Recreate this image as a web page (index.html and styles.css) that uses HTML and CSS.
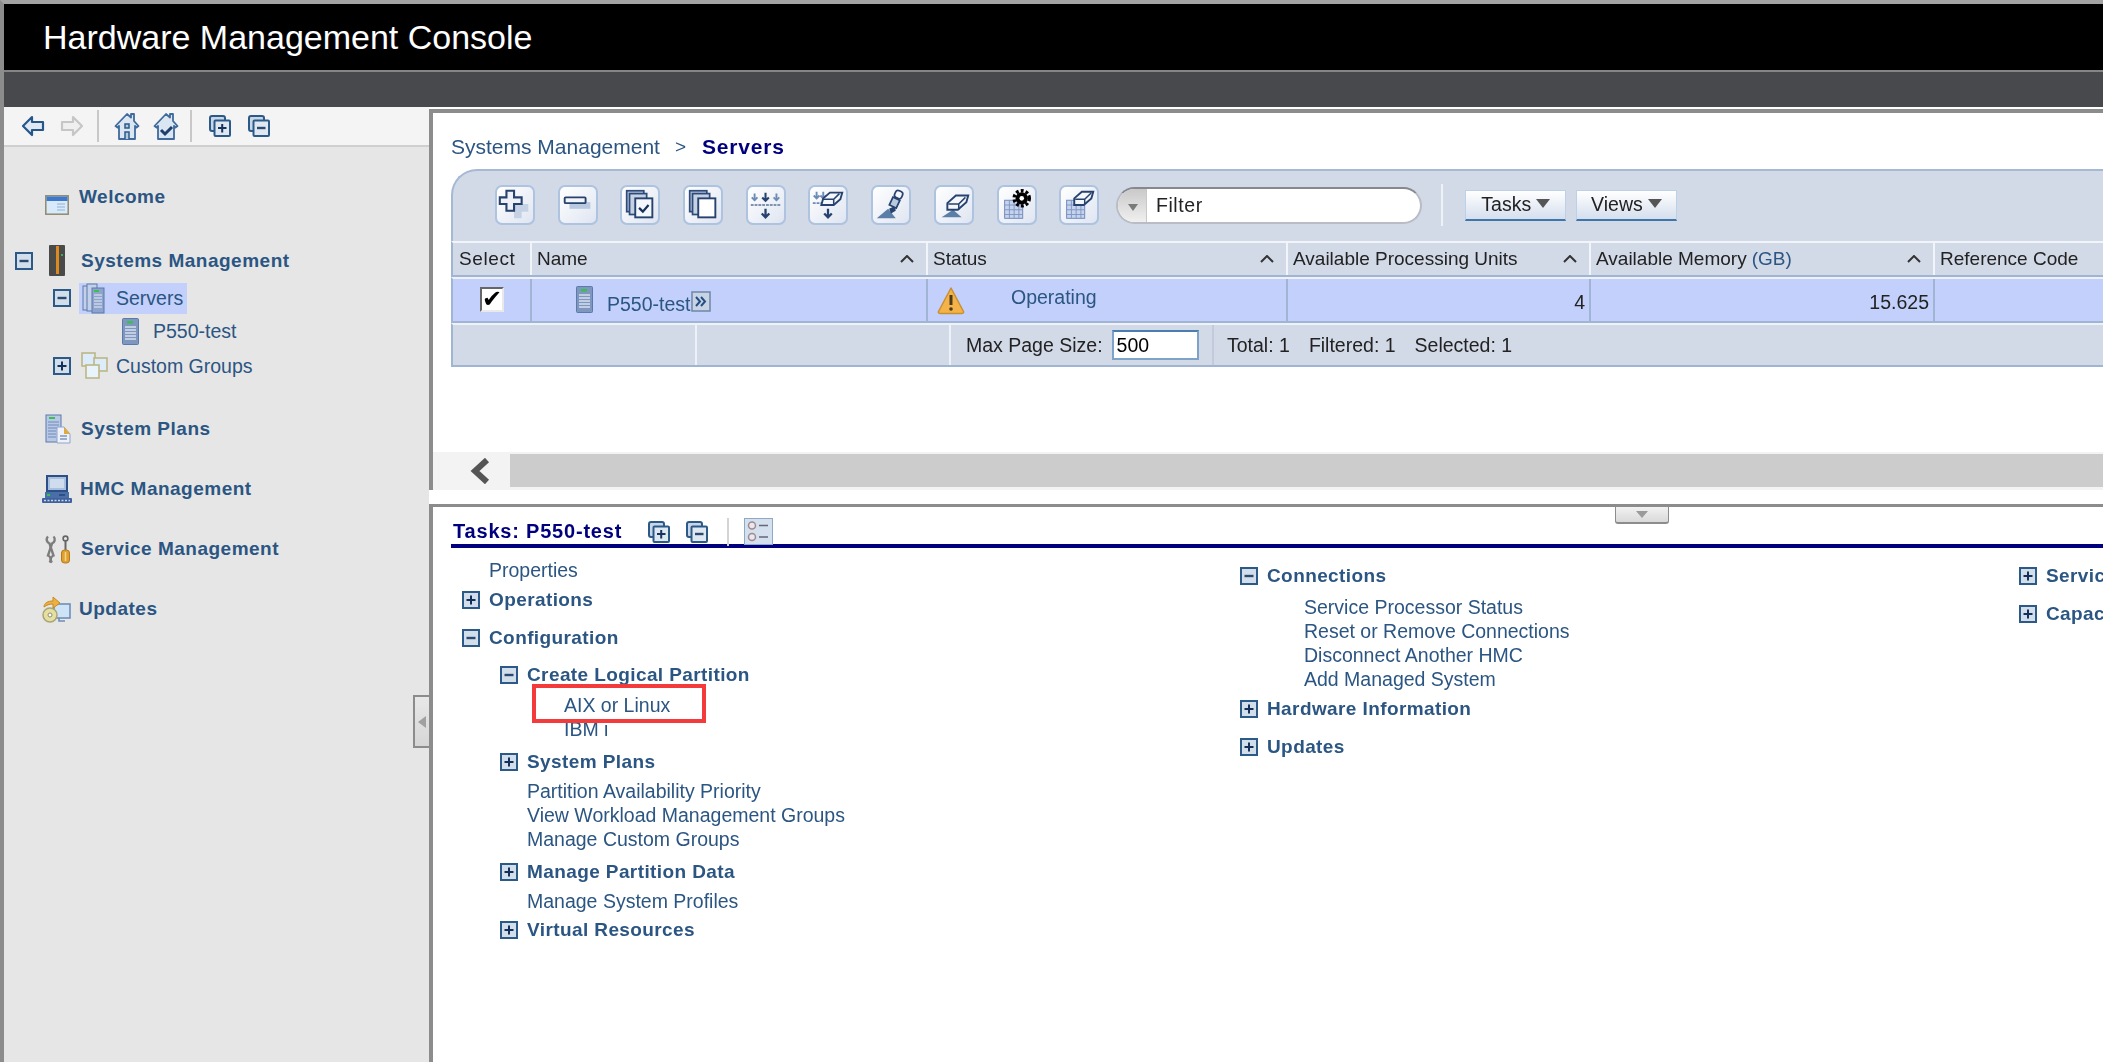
FILE: index.html
```html
<!DOCTYPE html>
<html>

<head>
    <meta name="viewport" content="width=device-width, initial-scale=1">
    <title>Hardware Management Console</title>
    <link rel="stylesheet" href="styles.css">
</head>

<body>
    <!-- icon sprites -->
    <svg class="sprites" width="0" height="0">
        <symbol id="i-plus" viewBox="0 0 18 18"><rect x="1" y="1" width="16" height="16" fill="#d3deeb" stroke="#2c5a88" stroke-width="2"/><path d="M4.5 9h9M9 4.5v9" stroke="#14305a" stroke-width="2"/></symbol>
        <symbol id="i-minus" viewBox="0 0 18 18"><rect x="1" y="1" width="16" height="16" fill="#d3deeb" stroke="#2c5a88" stroke-width="2"/><path d="M4.5 9h9" stroke="#2c4a70" stroke-width="2.4"/></symbol>
        <symbol id="i-back" viewBox="0 0 24 22"><path d="M11 2 2 11l9 9v-5h11V7H11z" fill="#dfe8f3" stroke="#27578a" stroke-width="2.2" stroke-linejoin="round"/></symbol>
        <symbol id="i-fwd" viewBox="0 0 24 22"><path d="M13 2l9 9-9 9v-5H2V7h11z" fill="#efefef" stroke="#c6c6c6" stroke-width="2.2" stroke-linejoin="round"/></symbol>
        <symbol id="i-home" viewBox="0 0 26 30"><path d="M13 3 1.5 15l2 1.5L5 15v13h16V15l1.5 1.5 2-1.5L20 10V3h-3v3.5z" fill="#dbe6f3" stroke="#3f6a9c" stroke-width="1.8" stroke-linejoin="round"/><path d="M11 28v-7h4v7M11 13h4v4h-4z" fill="#b4c8e0" stroke="#2c5a88" stroke-width="1.5"/></symbol>
        <symbol id="i-homecheck" viewBox="0 0 26 30"><path d="M13 3 1.5 15l2 1.5L5 15v13h16V15l1.5 1.5 2-1.5L20 10V3h-3v3.5z" fill="#dbe6f3" stroke="#3f6a9c" stroke-width="1.8" stroke-linejoin="round"/><path d="m8 19 4 4 7-7" fill="none" stroke="#1e3f6c" stroke-width="3"/></symbol>
        <symbol id="i-stackplus" viewBox="0 0 22 22"><rect x="1" y="1" width="15" height="15" rx="2" fill="#c8d6e8" stroke="#2c5a88" stroke-width="2"/><rect x="5.5" y="5.5" width="15.5" height="15.5" rx="1" fill="#dfe7f1" stroke="#2c5a88" stroke-width="2"/><path d="M9 13h8.5M13.2 9v8.5" stroke="#17345e" stroke-width="2"/></symbol>
        <symbol id="i-stackminus" viewBox="0 0 22 22"><rect x="1" y="1" width="15" height="15" rx="2" fill="#c8d6e8" stroke="#2c5a88" stroke-width="2"/><rect x="5.5" y="5.5" width="15.5" height="15.5" rx="1" fill="#dfe7f1" stroke="#2c5a88" stroke-width="2"/><path d="M9 13h8.5" stroke="#2c4a70" stroke-width="2.4"/></symbol>
        <symbol id="i-window" viewBox="0 0 24 20"><rect x=".8" y=".8" width="22.4" height="18.4" fill="#d8eafa" stroke="#8f8a70" stroke-width="1.5"/><rect x="1.5" y="1.5" width="21" height="4.5" fill="#3f78c8"/><path d="M12 9h8M12 12h8M12 15h8" stroke="#8fb0d8" stroke-width="1.2"/></symbol>
        <symbol id="i-tower" viewBox="0 0 16 31"><rect width="16" height="31" rx="1" fill="#4a4a48"/><rect x="7" y="1" width="3" height="28" fill="#d98a20"/><rect x="12" y="9" width="2" height="2" fill="#36b060"/></symbol>
        <symbol id="i-servers" viewBox="0 0 23 31"><rect x="1" y="3" width="9" height="24" fill="#c3d0ea" stroke="#5a79ac"/><rect x="5" y="1" width="10" height="27" fill="#c3d0ea" stroke="#5a79ac"/><rect x="10" y="5" width="12" height="25" fill="#8ea4cc" stroke="#5a79ac"/><path d="M12 12h8M12 15h8M12 18h8M12 21h8M12 24h8" stroke="#e5ebf6" stroke-width="1.2"/><rect x="12" y="7" width="5" height="2" fill="#38c050"/></symbol>
        <symbol id="i-server" viewBox="0 0 17 27"><rect x=".5" y=".5" width="16" height="26" rx="1" fill="#7f96bf" stroke="#5a79ac"/><path d="M3 9h11M3 12h11M3 15h11M3 18h11M3 21h11" stroke="#d7e0f0" stroke-width="1.3"/><rect x="5" y="3" width="6" height="2.5" fill="#38c050"/></symbol>
        <symbol id="i-groups" viewBox="0 0 27 28"><rect x="1" y="1" width="13" height="13" fill="#dcecfa" stroke="#bdb784" stroke-width="1.6"/><rect x="13" y="6" width="13" height="13" fill="#dcecfa" stroke="#bdb784" stroke-width="1.6"/><rect x="5" y="13" width="13" height="13" fill="#e8f4fc" stroke="#bdb784" stroke-width="1.6"/></symbol>
        <symbol id="i-plans" viewBox="0 0 26 30"><rect x="1" y="1" width="15" height="27" fill="#b9c8e4" stroke="#5a79ac"/><path d="M3 8h11M3 11h11M3 14h11M3 17h8M3 20h8M3 23h8" stroke="#6f8abb" stroke-width="1.2"/><rect x="4" y="3" width="6" height="2" fill="#38c050"/><path d="M12 13h7l6 7v9H12z" fill="#eef2f8" stroke="#8ea4cc"/><path d="M19 13v7h6z" fill="#e0a93c"/><path d="M15 22h7M15 25h7" stroke="#7f96bf" stroke-width="1.3"/></symbol>
        <symbol id="i-hmc" viewBox="0 0 30 29"><rect x="5" y="1" width="20" height="15" fill="#a9bfe0" stroke="#2c5086" stroke-width="2"/><rect x="8" y="4" width="14" height="9" fill="#cfdcee"/><rect x="3" y="17" width="24" height="6" fill="#4a6ea8"/><rect x="5" y="19" width="3" height="2" fill="#38c050"/><rect x="17" y="19" width="6" height="2" fill="#2c5086"/><rect y="23" width="30" height="5" rx="1" fill="#3f629e"/><path d="M2 25.5h26" stroke="#c7d4ea" stroke-width="1.4" stroke-dasharray="2 1.5"/></symbol>
        <symbol id="i-service" viewBox="0 0 26 29"><g fill="none" stroke="#7d7d7d" stroke-width="2.4"><path d="M3 1.500C.5 4 2 7.500 4.500 8.500l4 12C6 21.500 4.500 25 7 27.500"/><path d="M8.500 1.500C11 4 9.500 7.500 7 8.500l-4 12C5.500 21.500 7 25 4.500 27.500"/></g><path d="M20.500 15V6" stroke="#666" stroke-width="2"/><circle cx="20.500" cy="3.500" r="2.400" fill="none" stroke="#666" stroke-width="1.600"/><rect x="16.500" y="15" width="8" height="13" rx="3" fill="#e0a030" stroke="#b57a18"/><path d="M20.500 17v9" stroke="#f4d48a" stroke-width="1.500"/></symbol>
        <symbol id="i-updates" viewBox="0 0 29 27"><rect x="12" y="8" width="16" height="14" fill="#cfe3f6" stroke="#6d8fb8" stroke-width="1.6"/><path d="M17 22v3h6" stroke="#6d8fb8" stroke-width="1.6" fill="none"/><circle cx="8" cy="19" r="7" fill="#e5dfa0" stroke="#a9a577" stroke-width="1.5"/><circle cx="8" cy="19" r="2" fill="#fff" stroke="#8f8a70"/><path d="M2 11c0-4 4-6 9-6V1l7 6-7 5V8c-4 0-6 1-9 3z" fill="#eeb040" stroke="#c58a20"/></symbol>
        <symbol id="i-warn" viewBox="0 0 28 29"><path d="M14 2 1.5 25.500q-.5 2 2 2h21q2.500 0 2-2z" fill="#f4b349" stroke="#c98f32" stroke-width="1.500" stroke-linejoin="round"/><path d="M14 9v10" stroke="#4a3a20" stroke-width="3"/><circle cx="14" cy="23" r="1.800" fill="#4a3a20"/></symbol>
        <symbol id="i-launch" viewBox="0 0 20 21"><rect x="1" y="1" width="18" height="19" fill="#c8d4e4" stroke="#6d86a8" stroke-width="1.5"/><path d="m5 6 4 4.500L5 15M10 6l4 4.500L10 15" fill="none" stroke="#234e86" stroke-width="2"/></symbol>
        <symbol id="i-caret" viewBox="0 0 14 8"><path d="m1 7 6-6 6 6" fill="none" stroke="#333" stroke-width="2"/></symbol>
        <symbol id="i-checks" viewBox="0 0 29 27"><rect x=".5" y=".5" width="28" height="26" fill="#d5e0ee" stroke="#8ea8c8"/><circle cx="8" cy="7.500" r="3.500" fill="#e8e8ee" stroke="#a08a90" stroke-width="1.5"/><circle cx="8" cy="19" r="3.500" fill="#e8e8ee" stroke="#a08a90" stroke-width="1.5"/><path d="M15 7.500h9M15 19h9" stroke="#667" stroke-width="1.5"/></symbol>

        <symbol id="t-add" viewBox="0 0 40 40"><path d="M14 12h8v7h7v8h-7v7h-8v-7H7v-8h7z" transform="translate(5 0)" fill="#c5d2e6"/><path d="M11 5h8v7h8v7h-8v7h-8v-7H4v-7h7z" fill="#eef2f8" stroke="#27426e" stroke-width="2.2"/></symbol>
        <symbol id="t-del" viewBox="0 0 40 40"><rect x="11" y="17" width="22" height="7" fill="#b9c9e0"/><rect x="6" y="12" width="22" height="6" rx="1" fill="#f2f5fa" stroke="#27426e" stroke-width="2"/></symbol>
        <symbol id="t-sel" viewBox="0 0 40 40"><rect x="6" y="5" width="18" height="22" fill="#b4c3da" stroke="#2d4a78" stroke-width="1.8"/><rect x="9" y="8" width="18" height="22" fill="#c6d2e4" stroke="#2d4a78" stroke-width="1.8"/><rect x="15" y="13" width="18" height="20" fill="#f4f7fb" stroke="#27426e" stroke-width="2"/><path d="m19 23 4 4 6-7" fill="none" stroke="#17305a" stroke-width="2.4"/></symbol>
        <symbol id="t-desel" viewBox="0 0 40 40"><rect x="6" y="5" width="18" height="22" fill="#b4c3da" stroke="#2d4a78" stroke-width="1.8"/><rect x="9" y="8" width="18" height="22" fill="#c6d2e4" stroke="#2d4a78" stroke-width="1.8"/><rect x="15" y="13" width="18" height="20" fill="#fff" stroke="#27426e" stroke-width="2"/></symbol>
        <symbol id="t-filter" viewBox="0 0 40 40"><g fill="none" stroke="#6d8cb4" stroke-width="2"><path d="M8 8v7M31 8v7"/><path d="m5 12 3 3 3-3M28 12l3 3 3-3"/></g><path d="M19.500 7v8M16 12l3.500 3.500L23 12" fill="none" stroke="#27426e" stroke-width="2.2"/><path d="M4 20h32" stroke="#7f93b0" stroke-width="2" stroke-dasharray="3 1"/><path d="M19.500 24v9M15.500 29l4 4 4-4" fill="none" stroke="#27426e" stroke-width="2.4"/></symbol>
        <symbol id="t-filterclear" viewBox="0 0 40 40"><g fill="none" stroke="#6d8cb4" stroke-width="2"><path d="M8 6v7M5 10l3 3 3-3M15 6v7M12 10l3 3 3-3"/><path d="M4 18h12" stroke-dasharray="3 1"/></g><path d="m15 13 7-6h13l-2 7-7 6H13z" fill="#f4f7fb" stroke="#27426e" stroke-width="2"/><path d="M14 14h12l6-6M26 14v6" fill="none" stroke="#27426e" stroke-width="1.6"/><path d="M20 24v9M16 29l4 4 4-4" fill="none" stroke="#27426e" stroke-width="2.4"/></symbol>
        <symbol id="t-edit" viewBox="0 0 40 40"><path d="M5 34h20l-8-10z" fill="#5b7ea8"/><path d="m18 24 2 5 5-3-1-5z" fill="#27426e"/><rect x="20" y="13" width="8" height="9" transform="rotate(25 24 17)" fill="#b9c9e0" stroke="#27426e" stroke-width="1.8"/><rect x="24" y="5" width="8" height="8" rx="3" transform="rotate(25 28 9)" fill="#f4f7fb" stroke="#27426e" stroke-width="1.8"/></symbol>
        <symbol id="t-erase" viewBox="0 0 40 40"><path d="M7 33h21l-9-8z" fill="#5b7ea8"/><path d="m13 18 9-8h13l-2 7-9 8H13z" fill="#f4f7fb" stroke="#27426e" stroke-width="2"/><path d="M14 19h11l7-7M25 19v6" fill="none" stroke="#27426e" stroke-width="1.6"/></symbol>
        <symbol id="t-gear" viewBox="0 0 40 40"><rect x="7" y="15" width="19" height="19" fill="#c6d3ec" stroke="#6d86b8"/><path d="M12 15v19M17 15v19M22 15v19M7 20h19M7 25h19M7 30h19" stroke="#7f96c4"/><circle cx="25" cy="13" r="8" fill="none" stroke="#000" stroke-width="3.5" stroke-dasharray="3 2.2"/><circle cx="25" cy="13" r="6.5" fill="#000"/><circle cx="25" cy="13" r="2.4" fill="#fff"/></symbol>
        <symbol id="t-tableclear" viewBox="0 0 40 40"><rect x="7" y="15" width="19" height="19" fill="#c6d3ec" stroke="#6d86b8"/><path d="M12 15v19M17 15v19M22 15v19M7 20h19M7 25h19M7 30h19" stroke="#7f96c4"/><path d="m15 13 8-7h12l-2 7-8 7H15z" fill="#f4f7fb" stroke="#27426e" stroke-width="2"/><path d="M16 14h10l7-7M26 14v5" fill="none" stroke="#27426e" stroke-width="1.5"/></symbol>
    </svg>

    <div class="app">
        <div class="banner">Hardware Management Console</div>
        <div class="subbar"></div>

        <div class="main">
            <div class="nav">
                <div class="nav-tools">
                    <svg class="t-arrow"><use href="#i-back"/></svg>
                    <svg class="t-arrow"><use href="#i-fwd"/></svg>
                    <span class="t-sep"></span>
                    <svg class="t-home"><use href="#i-home"/></svg>
                    <svg class="t-home"><use href="#i-homecheck"/></svg>
                    <span class="t-sep"></span>
                    <svg class="t-stack"><use href="#i-stackplus"/></svg>
                    <svg class="t-stack"><use href="#i-stackminus"/></svg>
                </div>

                <div class="tree">
                    <div class="node top first">
                        <svg class="welcome-icon" width="24" height="20"><use href="#i-window"/></svg>
                        <a class="top-link">Welcome</a>
                    </div>
                    <div class="node top has-exp">
                        <svg class="exp" width="18" height="18"><use href="#i-minus"/></svg>
                        <svg class="tower-icon" width="16" height="31"><use href="#i-tower"/></svg>
                        <a class="top-link">Systems Management</a>
                    </div>
                    <div class="node sub servers-row">
                        <svg class="exp" width="18" height="18"><use href="#i-minus"/></svg>
                        <span class="selected">
                            <svg width="23" height="31"><use href="#i-servers"/></svg>
                            <a>Servers</a>
                        </span>
                    </div>
                    <div class="node leaf">
                        <svg width="17" height="27"><use href="#i-server"/></svg>
                        <a>P550-test</a>
                    </div>
                    <div class="node sub groups-row">
                        <svg class="exp" width="18" height="18"><use href="#i-plus"/></svg>
                        <svg class="groups-icon" width="27" height="28"><use href="#i-groups"/></svg>
                        <a>Custom Groups</a>
                    </div>
                    <div class="node top plans-row">
                        <svg class="top-icon" width="26" height="30"><use href="#i-plans"/></svg>
                        <a class="top-link">System Plans</a>
                    </div>
                    <div class="node top">
                        <svg class="top-icon wide" width="30" height="29"><use href="#i-hmc"/></svg>
                        <a class="top-link">HMC Management</a>
                    </div>
                    <div class="node top">
                        <svg class="top-icon" width="26" height="29"><use href="#i-service"/></svg>
                        <a class="top-link">Service Management</a>
                    </div>
                    <div class="node top">
                        <svg class="top-icon wide" width="29" height="27"><use href="#i-updates"/></svg>
                        <a class="top-link">Updates</a>
                    </div>
                </div>

                <div class="side-handle"><span></span></div>
            </div>

            <div class="content">
                <div class="work">
                    <div class="crumbs">
                        <a>Systems Management</a><span class="crumb-sep">&gt;</span><b>Servers</b>
                    </div>

                    <div class="toolbar">
                        <span class="tbtn"><svg width="38" height="38"><use href="#t-add"/></svg></span>
                        <span class="tbtn"><svg width="38" height="38"><use href="#t-del"/></svg></span>
                        <span class="tbtn"><svg width="38" height="38"><use href="#t-sel"/></svg></span>
                        <span class="tbtn"><svg width="38" height="38"><use href="#t-desel"/></svg></span>
                        <span class="tbtn"><svg width="38" height="38"><use href="#t-filter"/></svg></span>
                        <span class="tbtn"><svg width="38" height="38"><use href="#t-filterclear"/></svg></span>
                        <span class="tbtn"><svg width="38" height="38"><use href="#t-edit"/></svg></span>
                        <span class="tbtn"><svg width="38" height="38"><use href="#t-erase"/></svg></span>
                        <span class="tbtn"><svg width="38" height="38"><use href="#t-gear"/></svg></span>
                        <span class="tbtn"><svg width="38" height="38"><use href="#t-tableclear"/></svg></span>
                        <div class="filter"><span class="filter-drop"></span><span class="filter-text">Filter</span></div>
                        <span class="bar-sep"></span>
                        <span class="menu-btn first-menu">Tasks<i></i></span>
                        <span class="menu-btn">Views<i></i></span>
                    </div>

                    <div class="grid-row head-row">
                        <div class="cell">Select</div>
                        <div class="cell sort">Name<svg width="14" height="8"><use href="#i-caret"/></svg></div>
                        <div class="cell sort">Status<svg width="14" height="8"><use href="#i-caret"/></svg></div>
                        <div class="cell sort">Available Processing Units<svg width="14" height="8"><use href="#i-caret"/></svg></div>
                        <div class="cell sort">Available Memory <a>(GB)</a><svg width="14" height="8"><use href="#i-caret"/></svg></div>
                        <div class="cell">Reference Code</div>
                    </div>
                    <div class="grid-row data-row">
                        <div class="cell check-cell"><span class="check">&#10004;</span></div>
                        <div class="cell name-cell">
                            <svg class="name-icon" width="17" height="27"><use href="#i-server"/></svg>
                            <a>P550-test</a>
                            <svg class="launch" width="20" height="21"><use href="#i-launch"/></svg>
                        </div>
                        <div class="cell status-cell">
                            <svg width="28" height="29"><use href="#i-warn"/></svg>
                            <a>Operating</a>
                        </div>
                        <div class="cell num">4</div>
                        <div class="cell num">15.625</div>
                        <div class="cell"></div>
                    </div>
                    <div class="table-foot">
                        <div class="foot-blank first-blank"></div>
                        <div class="foot-blank second-blank"></div>
                        <div class="foot-size">Max Page Size:<span class="page-input">500</span></div>
                        <div class="foot-totals"><span>Total: 1</span><span>Filtered: 1</span><span>Selected: 1</span></div>
                    </div>
                </div>

                <div class="hscroll">
                    <span class="hscroll-left"><svg width="24" height="26"><path d="M18 2 6 13l12 11" fill="none" stroke="#555" stroke-width="6"/></svg></span>
                    <span class="hscroll-track"></span>
                </div>

                <div class="splitter"></div>

                <div class="tasks">
                    <div class="down-handle"><span></span></div>
                    <div class="tasks-title">
                        <b>Tasks: P550-test</b>
                        <svg class="title-stack" width="22" height="22"><use href="#i-stackplus"/></svg>
                        <svg class="title-stack" width="22" height="22"><use href="#i-stackminus"/></svg>
                        <span class="title-sep"></span>
                        <svg width="29" height="27"><use href="#i-checks"/></svg>
                    </div>

                    <div class="task-cols">
                        <div class="task-col">
                            <div class="t-row lvl1-link"><a>Properties</a></div>
                            <div class="t-row gap-s"><svg class="exp" width="18" height="18"><use href="#i-plus"/></svg><b>Operations</b></div>
                            <div class="t-row gap-l"><svg class="exp" width="18" height="18"><use href="#i-minus"/></svg><b>Configuration</b></div>
                            <div class="t-row gap-ml lvl2"><svg class="exp" width="18" height="18"><use href="#i-minus"/></svg><b>Create Logical Partition</b></div>
                            <div class="t-row gap-s lvl3 boxed"><a>AIX or Linux</a><span class="red-box"></span></div>
                            <div class="t-row lvl3"><a>IBM i</a></div>
                            <div class="t-row gap-m lvl2"><svg class="exp" width="18" height="18"><use href="#i-plus"/></svg><b>System Plans</b></div>
                            <div class="t-row gap-xs lvl2-link"><a>Partition Availability Priority</a></div>
                            <div class="t-row lvl2-link"><a>View Workload Management Groups</a></div>
                            <div class="t-row lvl2-link"><a>Manage Custom Groups</a></div>
                            <div class="t-row gap-m lvl2"><svg class="exp" width="18" height="18"><use href="#i-plus"/></svg><b>Manage Partition Data</b></div>
                            <div class="t-row gap-xs lvl2-link"><a>Manage System Profiles</a></div>
                            <div class="t-row gap-xs lvl2"><svg class="exp" width="18" height="18"><use href="#i-plus"/></svg><b>Virtual Resources</b></div>
                        </div>
                        <div class="task-col">
                            <div class="t-row gap-s"><svg class="exp" width="18" height="18"><use href="#i-minus"/></svg><b>Connections</b></div>
                            <div class="t-row gap-sm lvl1-deep"><a>Service Processor Status</a></div>
                            <div class="t-row lvl1-deep"><a>Reset or Remove Connections</a></div>
                            <div class="t-row lvl1-deep"><a>Disconnect Another HMC</a></div>
                            <div class="t-row lvl1-deep"><a>Add Managed System</a></div>
                            <div class="t-row gap-s"><svg class="exp" width="18" height="18"><use href="#i-plus"/></svg><b>Hardware Information</b></div>
                            <div class="t-row gap-l"><svg class="exp" width="18" height="18"><use href="#i-plus"/></svg><b>Updates</b></div>
                        </div>
                        <div class="task-col">
                            <div class="t-row gap-s"><svg class="exp" width="18" height="18"><use href="#i-plus"/></svg><b>Serviceability</b></div>
                            <div class="t-row gap-l"><svg class="exp" width="18" height="18"><use href="#i-plus"/></svg><b>Capacity On Demand (CoD)</b></div>
                        </div>
                    </div>
                </div>
            </div>
        </div>
    </div>
</body>

</html>
```

FILE: styles.css
```css
* {
    box-sizing: border-box;
}

html,
body {
    margin: 0;
    height: 100%;
    overflow: hidden;
    background: #fff;
}

body {
    font-family: "Liberation Sans", Arial, sans-serif;
    font-size: 19.5px;
    color: #2b5582;
}

.sprites {
    position: absolute;
}

svg {
    display: block;
    flex: none;
}

/* The reference is an upscaled capture, everything is a little soft */

.app {
    display: flex;
    flex-direction: column;
    width: 2103px;
    height: 1062px;
    border-top: 4px solid #a3a3a3;
    border-left: 4px solid #8c8c8c;
    filter: blur(0.45px);
}

.banner {
    height: 68px;
    padding: 3px 0 0 39px;
    background: #000;
    border-bottom: 2px solid #858585;
    color: #fff;
    font-size: 34px;
    line-height: 60px;
}

.subbar {
    height: 35px;
    background: #48494d;
}

.main {
    flex: 1;
    display: flex;
    min-height: 0;
}

/* Left navigation */

.nav {
    position: relative;
    width: 425px;
    flex: none;
    background: #e6e6e6;
}

.nav-tools {
    display: flex;
    align-items: center;
    height: 40px;
    padding-left: 17px;
    background: #f4f4f4;
    border-bottom: 2px solid #cfcfcf;
}

.t-arrow {
    width: 24px;
    height: 22px;
    margin-right: 15px;
}

.t-home {
    width: 26px;
    height: 30px;
    margin-right: 13px;
}

.t-stack {
    width: 22px;
    height: 22px;
    margin-right: 17px;
}

.t-sep {
    width: 2px;
    height: 32px;
    margin: 0 15px 0 -2px;
    background: #c8c8c8;
}

.t-home + .t-sep {
    margin-right: 17px;
}

.tree {
    padding-top: 33px;
}

.node {
    display: flex;
    align-items: center;
    height: 34px;
}

.node a {
    white-space: nowrap;
}

.top-link {
    font-weight: bold;
    font-size: 19px;
    letter-spacing: 0.5px;
}

.top {
    margin-top: 26px;
    padding-left: 41px;
}

.top.first {
    margin-top: 0;
}

.top.has-exp {
    margin-top: 30px;
    padding-left: 11px;
}

.top.plans-row {
    margin-top: 29px;
}

.welcome-icon {
    margin: 16px 10px 0 0;
}

.tower-icon {
    margin: -2px 16px 0 16px;
}

.top-icon {
    margin-right: 10px;
}

.top-icon.wide {
    margin-left: -3px;
    margin-right: 8px;
}

.sub {
    padding-left: 49px;
}

.servers-row {
    margin-top: 3px;
}

.groups-row {
    margin-top: 1px;
}

.selected {
    display: flex;
    align-items: center;
    gap: 11px;
    height: 31px;
    margin-left: 8px;
    padding: 0 4px 0 3px;
    background: #c3d0fb;
}

.groups-icon {
    margin: 0 8px 0 10px;
}

.leaf {
    gap: 14px;
    padding-left: 118px;
    margin-top: -1px;
}

.side-handle {
    position: absolute;
    top: 588px;
    right: 0;
    display: flex;
    align-items: center;
    justify-content: center;
    width: 16px;
    height: 53px;
    background: linear-gradient(#e8e8e8, #d6d6d6);
    border: 2px solid #8c8c8c;
    border-right: none;
}

.side-handle span {
    border: 6px solid transparent;
    border-right: 8px solid #a0a0a0;
    border-left: none;
}

/* Right side, the table runs past the window edge */

.content {
    flex: 1;
    display: flex;
    flex-direction: column;
    min-width: 0;
    position: relative;
}

.work {
    height: 343px;
    margin: 2px -12px 0 0;
    padding-left: 18px;
    border-top: 4px solid #8c8c8c;
    border-left: 4px solid #8c8c8c;
}

.crumbs {
    display: flex;
    align-items: center;
    height: 57px;
    padding-top: 13px;
    margin-top: -1px;
    font-size: 21px;
    white-space: nowrap;
}

.crumb-sep {
    margin: 0 16px 0 15px;
    font-size: 19px;
}

.crumbs b {
    color: #00007f;
    letter-spacing: 0.8px;
}

.toolbar {
    display: flex;
    align-items: center;
    gap: 22.7px;
    height: 72px;
    padding: 0 0 2px 42px;
    background: #d2d9e7;
    border-top: 2px solid #a5b9d4;
    border-left: 2px solid #a5b9d4;
    border-top-left-radius: 26px;
}

.tbtn {
    display: flex;
    align-items: center;
    justify-content: center;
    width: 40px;
    height: 40px;
    background: linear-gradient(135deg, #ffffff, #dfe5f1);
    border: 2px solid #adc3df;
    border-radius: 7px;
}

.filter {
    display: flex;
    align-items: stretch;
    width: 306px;
    height: 37px;
    margin-left: -6px;
    background: #fff;
    border: 2px solid #b9bcc2;
    border-top-color: #85888e;
    border-radius: 19px;
    overflow: hidden;
}

.filter-drop {
    position: relative;
    width: 29px;
    background: linear-gradient(#c9c9c9, #f0f0f0);
    border-right: 1px solid #c8c8c8;
}

.filter-drop::after {
    content: "";
    position: absolute;
    top: 15px;
    left: 10px;
    border: 5px solid transparent;
    border-top: 7px solid #7a7a7a;
    border-bottom: none;
}

.filter-text {
    padding-left: 9px;
    line-height: 33px;
    color: #222;
    letter-spacing: 0.6px;
}

.bar-sep {
    width: 2px;
    height: 42px;
    margin-left: -4px;
    background: #eef1f6;
}

.menu-btn {
    display: flex;
    align-items: center;
    justify-content: center;
    gap: 5px;
    width: 101px;
    height: 31px;
    margin-left: -13px;
    background: linear-gradient(#fff, #d5dfee);
    border: 1px solid #bcd0e6;
    border-bottom: 2px solid #3f76a8;
    color: #222;
}

.first-menu {
    margin-left: 0;
}

.menu-btn i {
    margin-top: -3px;
    border: 7px solid transparent;
    border-top: 9px solid #555;
    border-bottom: none;
}

.grid-row {
    display: grid;
    grid-template-columns: 79px 396px 360px 303px 344px 1fr;
    border-left: 2px solid #9fb5d3;
}

.cell {
    display: flex;
    align-items: center;
    padding: 0 5px;
    border-right: 2px solid #9fb5d3;
    white-space: nowrap;
    color: #222;
}

.head-row {
    height: 36px;
    background: #d2d9e7;
    border-top: 2px solid #f1f4f9;
    border-bottom: 2px solid #9fb5d3;
}

.head-row .cell {
    border-right: 2px solid #f1f4f9;
    font-size: 19px;
}

.head-row .cell:first-child {
    padding-left: 6px;
    letter-spacing: 0.6px;
}

.head-row a {
    margin-left: 5px;
    color: #2b5582;
}

.sort svg {
    margin-left: auto;
    margin-right: 7px;
}

.data-row {
    height: 46px;
    background: #c3d0fb;
    border-top: 2px solid #eef1f8;
    border-bottom: 2px solid #9fb5d3;
}

.check-cell {
    justify-content: center;
}

.check {
    display: flex;
    align-items: center;
    justify-content: center;
    width: 24px;
    height: 25px;
    margin-top: -2px;
    background: #fff;
    border: 2px solid;
    border-color: #666 #e9e9e9 #e9e9e9 #666;
    color: #000;
    font-size: 24px;
    line-height: 1;
}

.name-cell {
    padding-left: 44px;
}

.name-cell a {
    margin: 9px 1px 0 14px;
    color: #2b5582;
}

.name-icon {
    margin-top: -2px;
}

.launch {
    margin-top: 2px;
}

.status-cell {
    padding-left: 9px;
}

.status-cell a {
    margin: -6px 0 0 46px;
    color: #2b5582;
}

.num {
    justify-content: flex-end;
    padding-right: 4px;
    padding-top: 4px;
}

.table-foot {
    display: flex;
    align-items: center;
    height: 44px;
    background: #d2d9e7;
    border: 2px solid #9fb5d3;
    border-top-color: #eef1f8;
    color: #222;
    white-space: nowrap;
}

.foot-blank {
    height: 100%;
    border-right: 2px solid #eef1f8;
}

.first-blank {
    width: 244px;
}

.second-blank {
    width: 254px;
}

.foot-size {
    display: flex;
    align-items: center;
    gap: 9px;
    width: 263px;
    height: 100%;
    padding-left: 15px;
    border-right: 2px solid #c1cbdc;
}

.page-input {
    width: 87px;
    height: 30px;
    padding-left: 3px;
    background: #fff;
    border: 2px solid #7fa2c8;
    border-top-color: #4a7db0;
    line-height: 26px;
    color: #000;
}

.foot-totals {
    display: flex;
    gap: 19px;
    padding-left: 13px;
}

.hscroll {
    display: flex;
    height: 38px;
    padding: 2px 0 3px;
    background: #f3f3f3;
    border-left: 4px solid #8c8c8c;
}

.hscroll-left {
    display: flex;
    align-items: center;
    width: 77px;
    padding-left: 36px;
}

.hscroll-track {
    flex: 1;
    background: #cccccc;
}

.splitter {
    height: 14px;
    background: #fff;
}

/* Tasks panel */

.tasks {
    position: relative;
    flex: 1;
    padding-left: 18px;
    border-top: 3px solid #8c8c8c;
    border-left: 4px solid #8c8c8c;
}

.down-handle {
    position: absolute;
    top: 0;
    left: 1182px;
    display: flex;
    align-items: center;
    justify-content: center;
    width: 54px;
    height: 17px;
    background: linear-gradient(#f2f2f2, #d9d9d9);
    border: 1px solid #8c8c8c;
    border-top: none;
    border-bottom-width: 2px;
    border-radius: 0 0 3px 3px;
}

.down-handle span {
    border: 6px solid transparent;
    border-top: 7px solid #9a9a9a;
    border-bottom: none;
}

.tasks-title {
    display: flex;
    align-items: center;
    height: 41px;
    padding: 12px 0 0 2px;
    border-bottom: 4px solid #00007f;
}

.tasks-title b {
    width: 195px;
    color: #00007f;
    font-size: 20px;
    letter-spacing: 0.8px;
    white-space: nowrap;
}

.title-stack {
    margin-right: 16px;
}

.title-sep {
    width: 2px;
    height: 28px;
    margin: 0 15px 0 3px;
    background: #d4d4d4;
}

.task-cols {
    display: grid;
    grid-template-columns: 778px 779px 1fr;
    padding: 10px 0 0 11px;
    white-space: nowrap;
}

.t-row {
    display: flex;
    align-items: center;
    height: 24px;
}

.t-row .exp {
    margin-right: 9px;
}

.t-row b {
    font-size: 19px;
    letter-spacing: 0.4px;
}

.gap-xs {
    margin-top: 5px;
}

.gap-s {
    margin-top: 6px;
}

.gap-sm {
    margin-top: 7px;
}

.gap-m {
    margin-top: 9px;
}

.gap-ml {
    margin-top: 13px;
}

.gap-l {
    margin-top: 14px;
}

.lvl1-link {
    padding-left: 27px;
}

.lvl1-deep {
    padding-left: 64px;
}

.lvl2 {
    padding-left: 38px;
}

.lvl2-link {
    padding-left: 65px;
}

.lvl3 {
    padding-left: 102px;
}

.boxed {
    position: relative;
}

.red-box {
    position: absolute;
    left: 70px;
    top: -9px;
    width: 174px;
    height: 39px;
    border: 4px solid #f43b3b;
}
```
